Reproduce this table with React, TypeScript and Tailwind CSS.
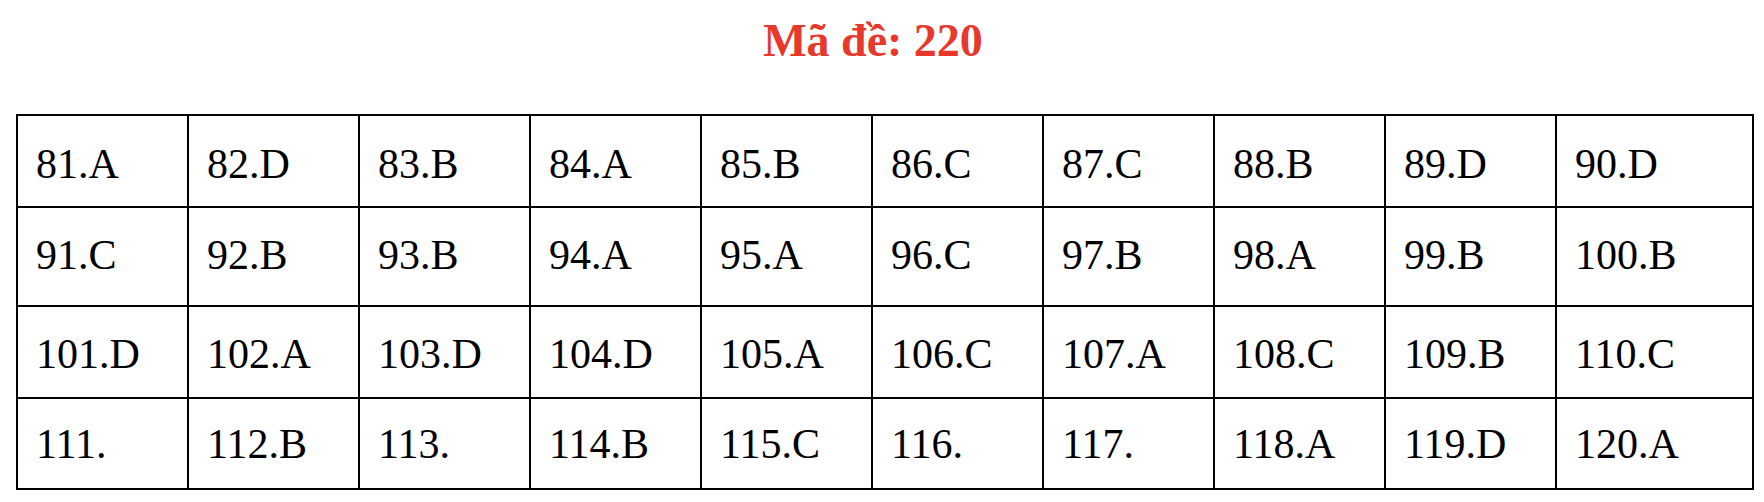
const rows: { h: string; pad: string; cells: string[] }[] = [
  {
    h: "h-[92px]",
    pad: "pt-[5px]",
    cells: ["81.A", "82.D", "83.B", "84.A", "85.B", "86.C", "87.C", "88.B", "89.D", "90.D"],
  },
  {
    h: "h-[99px]",
    pad: "pb-[4px]",
    cells: ["91.C", "92.B", "93.B", "94.A", "95.A", "96.C", "97.B", "98.A", "99.B", "100.B"],
  },
  {
    h: "h-[92px]",
    pad: "pt-[3px]",
    cells: ["101.D", "102.A", "103.D", "104.D", "105.A", "106.C", "107.A", "108.C", "109.B", "110.C"],
  },
  {
    h: "h-[91px]",
    pad: "pt-[1px]",
    cells: ["111.", "112.B", "113.", "114.B", "115.C", "116.", "117.", "118.A", "119.D", "120.A"],
  },
];

export default function App() {
  return (
    <div
      className="h-[502px] w-[1764px] bg-white text-black"
      style={{ fontFamily: '"Liberation Serif", "Times New Roman", serif' }}
    >
      <div className="flex h-[114px] justify-center pt-[18px] pr-[18px]">
        <h1 className="text-[46px] font-bold leading-none text-[#e8372b]">Mã đề: 220</h1>
      </div>

      <table className="ml-[16px] w-[1738px] table-fixed border-collapse border-2 border-black">
        <colgroup>
          {Array.from({ length: 9 }).map((_, i) => (
            <col key={i} className="w-[171px]" />
          ))}
          <col />
        </colgroup>
        <tbody>
          {rows.map((row, i) => (
            <tr key={i} className={row.h}>
              {row.cells.map((cell) => (
                <td
                  key={cell}
                  className={`border-2 border-black pl-[18px] align-middle text-[42px] leading-none ${row.pad}`}
                >
                  {cell}
                </td>
              ))}
            </tr>
          ))}
        </tbody>
      </table>
    </div>
  );
}
